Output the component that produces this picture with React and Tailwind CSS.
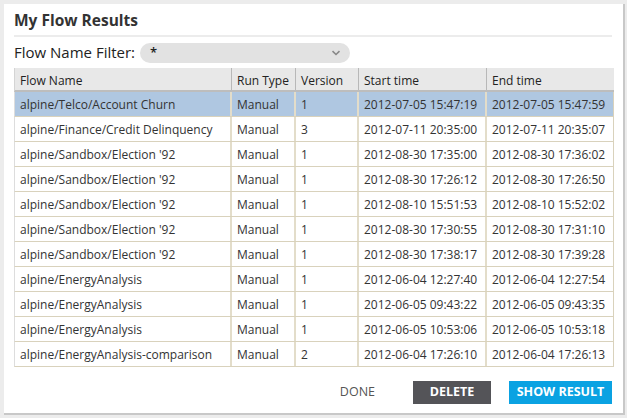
import React from "react";

// rows for the results table
const rows = [
  ["alpine/Telco/Account Churn", "Manual", "1", "2012-07-05 15:47:19", "2012-07-05 15:47:59"],
  ["alpine/Finance/Credit Delinquency", "Manual", "3", "2012-07-11 20:35:00", "2012-07-11 20:35:07"],
  ["alpine/Sandbox/Election '92", "Manual", "1", "2012-08-30 17:35:00", "2012-08-30 17:36:02"],
  ["alpine/Sandbox/Election '92", "Manual", "1", "2012-08-30 17:26:12", "2012-08-30 17:26:50"],
  ["alpine/Sandbox/Election '92", "Manual", "1", "2012-08-10 15:51:53", "2012-08-10 15:52:02"],
  ["alpine/Sandbox/Election '92", "Manual", "1", "2012-08-30 17:30:55", "2012-08-30 17:31:10"],
  ["alpine/Sandbox/Election '92", "Manual", "1", "2012-08-30 17:38:17", "2012-08-30 17:39:28"],
  ["alpine/EnergyAnalysis", "Manual", "1", "2012-06-04 12:27:40", "2012-06-04 12:27:54"],
  ["alpine/EnergyAnalysis", "Manual", "1", "2012-06-05 09:43:22", "2012-06-05 09:43:35"],
  ["alpine/EnergyAnalysis", "Manual", "1", "2012-06-05 10:53:06", "2012-06-05 10:53:18"],
  ["alpine/EnergyAnalysis-comparison", "Manual", "2", "2012-06-04 17:26:10", "2012-06-04 17:26:13"],
];

const headers = ["Flow Name", "Run Type", "Version", "Start time", "End time"];
const widths = ["w-[217px]", "w-[64px]", "w-[63px]", "w-[128px]", "w-[127px]"];

const App = () => {
  return (
    <div
      className="w-[627px] h-[418px] bg-[#ececec] pt-[4px] pl-[4px] overflow-hidden"
      style={{ fontFamily: '"Open Sans", sans-serif' }}
    >
      <div className="w-[621px] h-[411px] bg-white border-r-[2px] border-b-[2px] border-[#c8c8c8] px-[10px] flex flex-col">
        {/* Title */}
        <div className="h-[31px] pt-[6px] text-[15.5px] font-bold text-[#333] leading-[20px]">
          My Flow Results
        </div>
        <div className="h-[2px] bg-[#ececec] mr-[1px]" />

        {/* Filter */}
        <div className="flex items-center h-[31px]">
          <span className="text-[15px] text-[#222] mr-[5px]">Flow Name Filter:</span>
          <div className="w-[210px] h-[20px] rounded-full bg-[#e2e2e2] flex items-center justify-between pl-[10px] pr-[9px]">
            <span className="text-[13px] text-[#222] font-semibold">*</span>
            <svg width="10" height="6" viewBox="0 0 10 6">
              <path d="M1.5 1.2 L5 4.5 L8.5 1.2" fill="none" stroke="#888" strokeWidth="1.6" />
            </svg>
          </div>
        </div>

        {/* Table */}
        <div className="w-[600px] text-[12px] text-[#333]">
          <div className="flex h-[24px] bg-[#e8e8e8] border-b-[2px] border-[#bdbdbd] border-l border-l-[#d4d4d4]">
            {headers.map((h, i) => (
              <div
                key={h}
                className={`${widths[i]} px-[5px] pt-[3px] flex items-center whitespace-nowrap ${i < 4 ? "border-r border-[#b8b8b8]" : ""} text-[#222]`}
              >
                {h}
              </div>
            ))}
          </div>
          {rows.map((r, ri) => (
            <div
              key={ri}
              className={`flex h-[25px] border-b border-[#d9d2bc] border-l border-l-[#ddd] ${
                ri === 0 ? "bg-[#afc7e1]" : "bg-white"
              }`}
            >
              {r.map((c, ci) => (
                <div
                  key={ci}
                  className={`${widths[ci]} px-[5px] pt-[1px] flex items-center whitespace-nowrap ${
                    ci < 4 ? "border-r-[2px] border-[#e3ddca]" : "border-r border-[#d9d2bc]"
                  }`}
                >
                  {c}
                </div>
              ))}
            </div>
          ))}
        </div>

        {/* Buttons */}
        <div className="flex items-center justify-end mt-auto mb-[9px] mr-[1px] gap-[18px]">
          <button className="text-[12.5px] text-[#555] px-[4px] h-[23px] mr-[16px]">DONE</button>
          <button className="w-[78px] h-[23px] bg-[#545458] text-white text-[12.5px] font-bold">
            DELETE
          </button>
          <button className="w-[103px] h-[23px] bg-[#0aa2e2] text-white text-[12.5px] font-bold">
            SHOW RESULT
          </button>
        </div>
      </div>
    </div>
  );
};

export default App;
